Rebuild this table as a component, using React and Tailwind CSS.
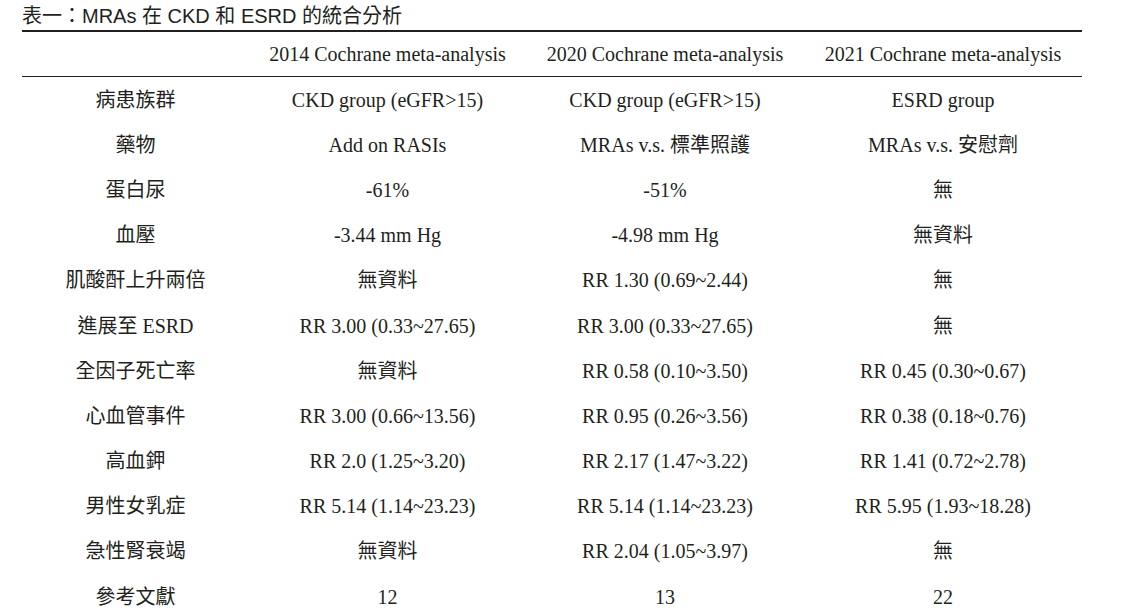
const header = ["", "2014 Cochrane meta-analysis", "2020 Cochrane meta-analysis", "2021 Cochrane meta-analysis"];

const rows = [
  ["病患族群", "CKD group (eGFR>15)", "CKD group (eGFR>15)", "ESRD group"],
  ["藥物", "Add on RASIs", "MRAs v.s. 標準照護", "MRAs v.s. 安慰劑"],
  ["蛋白尿", "-61%", "-51%", "無"],
  ["血壓", "-3.44 mm Hg", "-4.98 mm Hg", "無資料"],
  ["肌酸酐上升兩倍", "無資料", "RR 1.30 (0.69~2.44)", "無"],
  ["進展至 ESRD", "RR 3.00 (0.33~27.65)", "RR 3.00 (0.33~27.65)", "無"],
  ["全因子死亡率", "無資料", "RR 0.58 (0.10~3.50)", "RR 0.45 (0.30~0.67)"],
  ["心血管事件", "RR 3.00 (0.66~13.56)", "RR 0.95 (0.26~3.56)", "RR 0.38 (0.18~0.76)"],
  ["高血鉀", "RR 2.0 (1.25~3.20)", "RR 2.17 (1.47~3.22)", "RR 1.41 (0.72~2.78)"],
  ["男性女乳症", "RR 5.14 (1.14~23.23)", "RR 5.14 (1.14~23.23)", "RR 5.95 (1.93~18.28)"],
  ["急性腎衰竭", "無資料", "RR 2.04 (1.05~3.97)", "無"],
  ["參考文獻", "12", "13", "22"],
];

const cols = "grid grid-cols-[227px_277px_278px_278px]";

export default function App() {
  return (
    <div className="w-[1125px] h-[613px] overflow-hidden bg-white text-[#231f20]">
      <div className="ml-[22px] w-[1060px]">
        <div
          className="h-[30px] flex items-center text-[20px] font-normal leading-none pt-[1px]"
          style={{ fontFamily: '"Liberation Sans", "Noto Sans CJK TC", sans-serif' }}
        >
          表一：MRAs 在 CKD 和 ESRD 的統合分析
        </div>
        <div
          className="text-[20px] leading-none"
          style={{ fontFamily: '"Liberation Serif", "Noto Sans CJK TC", serif' }}
        >
          <div className={`${cols} h-[47px] border-t-2 border-b border-[#231f20]`}>
            {header.map((h, i) => (
              <div key={i} className="flex items-center justify-center pb-[1px]">{h}</div>
            ))}
          </div>
          {rows.map((r, i) => (
            <div key={i} className={`${cols} h-[45.2px]`}>
              {r.map((c, j) => (
                <div key={j} className="flex items-center justify-center whitespace-nowrap">{c}</div>
              ))}
            </div>
          ))}
        </div>
      </div>
    </div>
  );
}
